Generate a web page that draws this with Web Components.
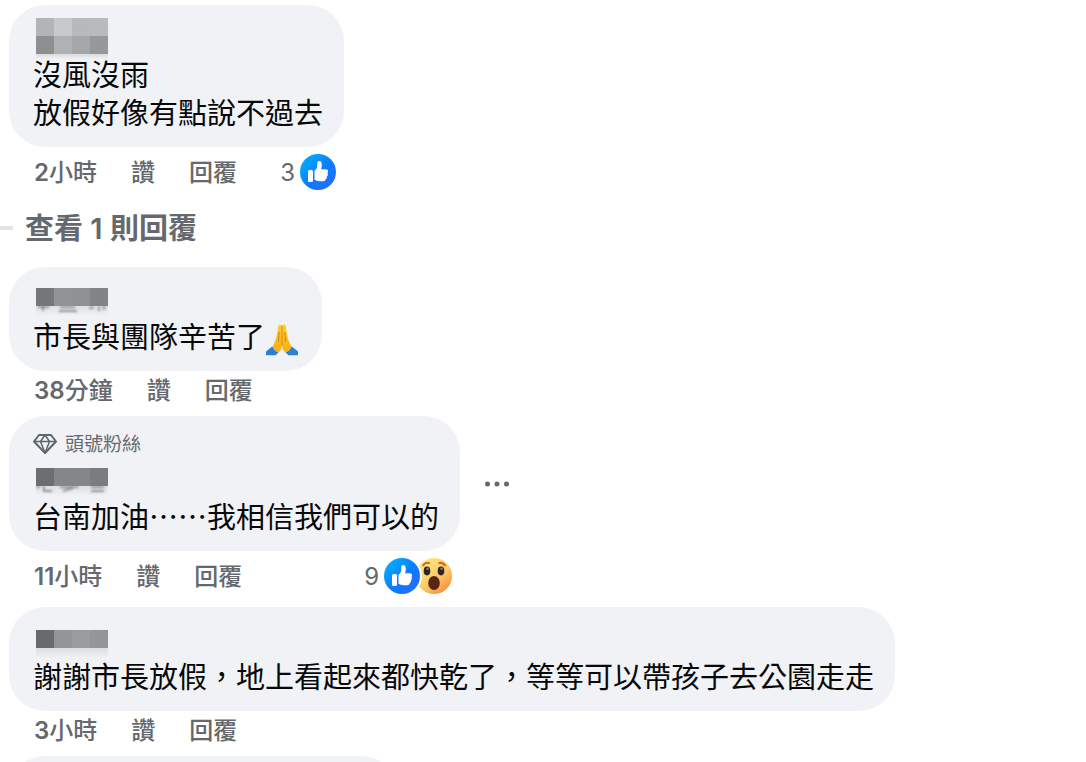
<!DOCTYPE html>
<html lang="zh-Hant">
<head>
<meta charset="utf-8">
<meta name="viewport" content="width=device-width, initial-scale=1">
<title>留言</title>
<style>
  html, body { margin: 0; height: 100%; overflow: hidden; background: #fff; }
  body { font-family: Inter, "Noto Sans CJK TC", sans-serif; color: #080809; }
</style>
</head>
<body>
<comment-list>
  <comment-item>
    <masked-name slot="name" variant="a"></masked-name>
    沒風沒雨<br>放假好像有點說不過去
    <comment-actions slot="actions" amount="2" unit="小時" count="3"><reaction-icon kind="like"></reaction-icon></comment-actions>
  </comment-item>
  <reply-toggle>查看 1 則回覆</reply-toggle>
  <comment-item>
    <masked-name slot="name" variant="b"></masked-name>
    市長與團隊辛苦了<pray-emoji></pray-emoji>
    <comment-actions slot="actions" amount="38" unit="分鐘"></comment-actions>
  </comment-item>
  <comment-item>
    <fan-badge slot="badge">頭號粉絲</fan-badge>
    <masked-name slot="name" variant="c"></masked-name>
    台南加油⋯⋯我相信我們可以的
    <more-button slot="more"></more-button>
    <comment-actions slot="actions" amount="11" unit="小時" count="9"><reaction-icon kind="like"></reaction-icon><reaction-icon kind="wow"></reaction-icon></comment-actions>
  </comment-item>
  <comment-item>
    <masked-name slot="name" variant="d"></masked-name>
    謝謝市長放假，地上看起來都快乾了，等等可以帶孩子去公園走走
    <comment-actions slot="actions" amount="3" unit="小時"></comment-actions>
  </comment-item>
  <comment-item class="next"></comment-item>
</comment-list>

<script>
const define = (name, html) => customElements.define(name, class extends HTMLElement {
  constructor() {
    super();
    this.attachShadow({ mode: "open" }).innerHTML = typeof html === "function" ? html(this) : html;
  }
});

define("comment-list", `
  <style>
    :host { display: flex; flex-direction: column; align-items: flex-start; gap: 7px; padding: 5px 9px 0;
      box-sizing: border-box; height: 100vh; overflow: hidden; }
    ::slotted(*) { flex: none; }
    ::slotted(.next) { --bubble-min: 343px; }
  </style>
  <slot></slot>`);

define("comment-item", `
  <style>
    :host { display: grid; grid-template-columns: auto auto; column-gap: 20px; align-items: center; max-width: 100%; }
    .bubble { box-sizing: border-box; padding: 13px 21px 14px 24px; border-radius: 36px; background: #f0f2f5;
      min-height: 104px; font-size: 29px; line-height: 38px; }
    .text { min-width: var(--bubble-min, 0); }
  </style>
  <article class="bubble">
    <slot name="badge"></slot>
    <slot name="name"></slot>
    <div class="text"><slot></slot></div>
  </article>
  <slot name="more"></slot>
  <slot name="actions"></slot>`);

define("comment-actions", el => {
  const count = el.getAttribute("count");
  return `
  <style>
    :host { grid-column: 1; display: flex; align-items: center; justify-content: space-between;
      height: ${count ? 49 : 38}px; padding: 0 8px 0 25px; font-size: 24px; line-height: 30px; color: #65686c; }
    .links, .reactions { display: flex; align-items: center; }
    .links { gap: 34px; padding-top: 2px; }
    a, button { font: inherit; font-weight: 500; color: inherit; text-decoration: none; white-space: nowrap;
      border: 0; padding: 0; background: none; }
    b { font-weight: 600; }
    .count { margin-right: 5px; padding-top: 2px; }
  </style>
  <div class="links"><a href="#"><b>${el.getAttribute("amount")}</b>${el.getAttribute("unit")}</a><button type="button">讚</button><button type="button">回覆</button></div>
  ${count ? `<div class="reactions"><span class="count">${count}</span><slot></slot></div>` : ""}`;
});

define("reply-toggle", `
  <style>
    :host { display: flex; align-items: center; gap: 12px; height: 64px; margin: -7px 0 0 -9px; }
    i { width: 13px; height: 4px; background: #e2e4e7; }
    button { border: 0; padding: 2px 0 0; background: none; color: #65686c; font: inherit; font-weight: 600; font-size: 29px; line-height: 38px; }
  </style>
  <i></i><button type="button"><slot></slot></button>`);

define("more-button", `
  <style>
    :host { display: flex; margin-left: 3px; }
    button { display: flex; border: 0; padding: 0; background: none; }
  </style>
  <button type="button" aria-label="更多">
    <svg width="30" height="36" fill="#65686c"><circle cx="4.500" cy="18" r="2.500"/><circle cx="14" cy="18" r="2.500"/><circle cx="23.500" cy="18" r="2.500"/></svg>
  </button>`);

define("fan-badge", `
  <style>
    :host { display: flex; align-items: center; gap: 8px; height: 31px; font-size: 19px; line-height: 31px; color: #65686c; }
    svg { margin-bottom: 2px; }
  </style>
  <svg width="24" height="20" viewBox="0 0 24 20" fill="none" stroke="#5d6670" stroke-width="2" stroke-linejoin="round" aria-hidden="true">
    <path d="M6 1h12l5 6.500L12 19 1 7.500z"/><path d="M1 7.500h22M7.500 7.500 12 19 16.500 7.500M7.500 7.500 12 1 16.500 7.500" stroke-width="1.500"/>
  </svg>
  <slot></slot>`);

/* Pixelated cover for a private name: top offset, one row of tints per 18px band, and a soft tail. */
const masks = {
  a: { top: 0, rows: [["#b3b4b5", "#c8c9cb", "#b8b9bb", "#b9babc"], ["#8e8f90", "#b0b1b2", "#a5a6a7", "#979899"]], tail: "#d9dadd", smudge: "" },
  b: { top: 8, rows: [["#767778", "#929394", "#8f9091", "#828384"]], tail: "#dfe0e3", smudge: "M5 27h11M10 24v7M27 27h15M26 31h18M56 28h5M66 26v5M71 25v5" },
  c: { top: 8, rows: [["#6d6e6f", "#858687", "#858687", "#7b7c7d"]], tail: "#dddee0", smudge: "M4 28l3-3M11 26v5h8M27 27h18M30 31l10-3M58 27h13M58 31h13" },
  d: { top: 10, rows: [["#696a6b", "#939495", "#9b9c9d", "#949596"]], tail: "#dcdde0", smudge: "" }
};
define("masked-name", el => {
  const v = el.getAttribute("variant"), m = masks[v];
  const bottom = m.top + m.rows.length * 18;
  return `
  <style>:host { display: flex; height: 39px; } svg { overflow: visible; }</style>
  <svg width="100" height="38" role="img" aria-label="姓名已遮蔽">
    <defs><linearGradient id="t" x2="0" y2="1"><stop stop-color="${m.tail}"/><stop offset="1" stop-color="#f0f2f5"/></linearGradient>
    <filter id="s" x="-10%" y="-50%" width="120%" height="200%"><feGaussianBlur stdDeviation="1"/></filter></defs>
    <rect x="3" y="${bottom}" width="72" height="${v === "a" ? 5 : 10}" fill="url(#t)"/>
    <path d="${m.smudge}" stroke="#929395" stroke-width="2" fill="none" filter="url(#s)"/>
    ${m.rows.map((r, y) => r.map((c, x) => `<rect x="${3 + x * 18}" y="${m.top + y * 18}" width="18" height="18" fill="${c}"/>`).join("")).join("")}
  </svg>`;
});

define("pray-emoji", `
  <style>:host { display: inline-block; height: 32px; vertical-align: -8px; } svg { display: block; }</style>
  <svg width="36" height="32" viewBox="0 0 36 32" role="img" aria-label="雙手合十">
    <defs><linearGradient id="h" x2="0" y2="1"><stop stop-color="#ffd02e"/><stop offset="1" stop-color="#f7ad13"/></linearGradient></defs>
    <path d="M16.800 1c-1.500-1-3.300-.6-3.600 1.200C12.500 7 11.800 13 9.800 18l-2.600 5.500 5.200 5.500c3-1.500 4.400-4 4.400-7z" fill="url(#h)"/>
    <path d="M17.200 1c1.500-1 3.300-.6 3.600 1.200.7 4.800 1.400 10.800 3.400 15.800l2.600 5.500-5.200 5.500c-3-1.500-4.400-4-4.400-7z" fill="url(#h)"/>
    <path d="M17 2v20M14.200 8l-.8 10M19.800 8l.8 10" stroke="#d98c10" stroke-width="1.200" fill="none"/>
    <path d="M7.200 22.500 1 27.500v3.700h9.500l3-2.700c-3-.8-5-3-6.300-6zM26.800 22.500l6.200 5v3.700h-9.500l-3-2.700c3-.8 5-3 6.300-6z" fill="#2b7fd6"/>
  </svg>`);

const faces = {
  like: `
    <defs><linearGradient id="g" x1="0" y1="0" x2="1" y2="1"><stop offset=".1" stop-color="#02adfc"/><stop offset=".55" stop-color="#0a7cff"/><stop offset="1" stop-color="#2f66fb"/></linearGradient></defs>
    <circle cx="18" cy="18" r="18" fill="url(#g)"/>
    <rect x="8" y="16" width="5" height="12" rx="1.500" fill="#fff"/>
    <path d="M14.500 16.800c2-1.600 2.800-3.300 2.800-5.700V9c0-1.300.7-2 1.800-2 1.900 0 2.700 1.500 2.700 3.700 0 1.800-.3 3.200-.8 4.500h4.600c1.500 0 2.500.9 2.500 2.100 0 .8-.3 1.300-.8 1.700.5.500.7 1 .6 1.700-.1.700-.5 1.300-1 1.600.2.400.2.900 0 1.400-.2.600-.7 1.100-1.200 1.300.1 1.400-.9 2.200-2.800 2.200h-3.300c-2 0-3.700-.5-5.100-1.400z" fill="#fff"/>`,
  wow: `
    <defs><linearGradient id="g" x1=".15" y1=".1" x2=".85" y2=".95"><stop stop-color="#ffe680"/><stop offset=".55" stop-color="#fdcb68"/><stop offset="1" stop-color="#f58a3c"/></linearGradient></defs>
    <circle cx="18" cy="18" r="18" fill="url(#g)"/>
    <path d="M7 7.500c1.600-2.300 4-3 6.300-2.400M23 5.100c2.300-.6 4.600.2 6.100 2.400" stroke="#c96c1d" stroke-width="2" stroke-linecap="round" fill="none"/>
    <ellipse cx="11" cy="13" rx="3.300" ry="4.400" fill="#2b2523"/><ellipse cx="25" cy="13" rx="3.300" ry="4.400" fill="#2b2523"/>
    <circle cx="11.600" cy="10.800" r="1.200" fill="#8a8078"/><circle cx="25.600" cy="10.800" r="1.200" fill="#8a8078"/>
    <ellipse cx="18" cy="25" rx="5.800" ry="7" fill="#5a2413"/>`
};
define("reaction-icon", el => {
  const like = el.getAttribute("kind") === "like";
  return `
  <style>
    :host { display: block; height: 36px; border-radius: 50%; ${like ? "position: relative; z-index: 1; box-shadow: 0 0 0 2px #fff;" : "margin-left: -4px;"} }
    svg { display: block; }
  </style>
  <svg width="36" height="36" viewBox="0 0 36 36" role="img" aria-label="${like ? "讚" : "哇"}">${faces[like ? "like" : "wow"]}</svg>`;
});
</script>
</body>
</html>
